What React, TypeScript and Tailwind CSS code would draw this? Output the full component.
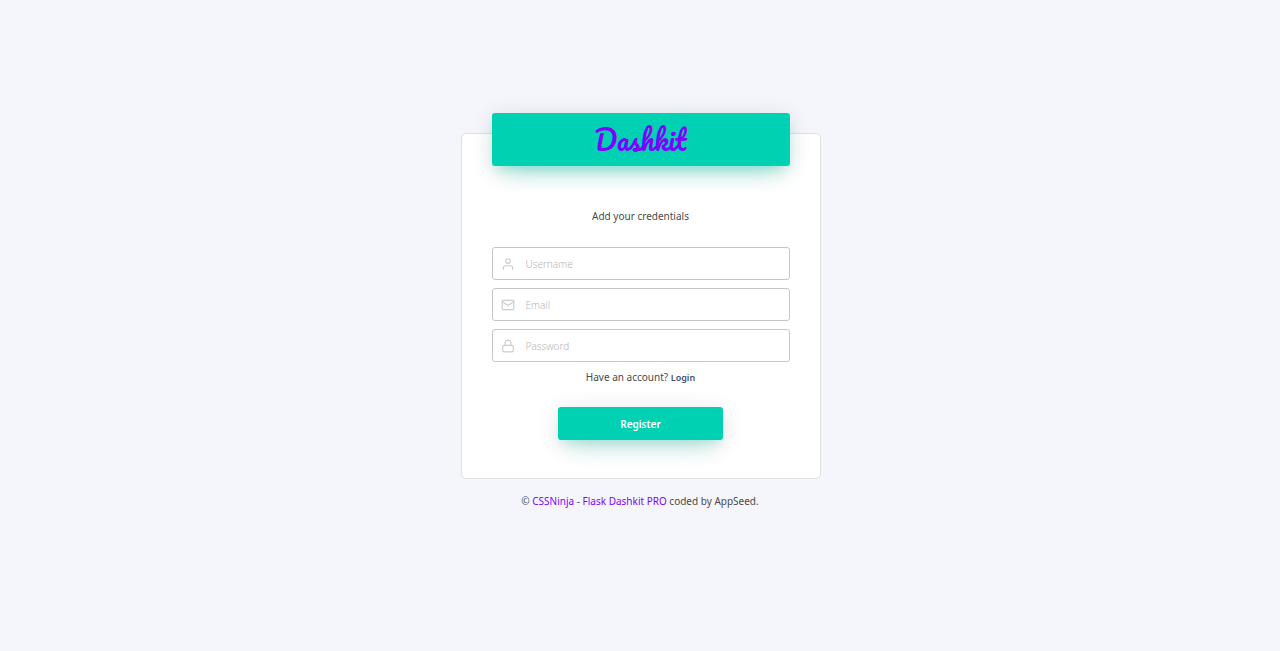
import type { ReactNode } from "react";

type FieldProps = {
  id: string;
  type: string;
  label: string;
  icon: ReactNode;
};

const raised =
  "bg-[#00d1b2] shadow-[0_14px_26px_-12px_rgba(0,209,178,0.42),0_4px_23px_0_rgba(0,0,0,0.12),0_8px_10px_-5px_rgba(0,209,178,0.2)]";

function Icon({ children }: { children: ReactNode }) {
  return (
    <svg
      className="size-3.5 shrink-0"
      viewBox="0 0 24 24"
      fill="none"
      stroke="currentColor"
      strokeWidth="2"
      strokeLinecap="round"
      strokeLinejoin="round"
      aria-hidden="true"
    >
      {children}
    </svg>
  );
}

function Field({ id, type, label, icon }: FieldProps) {
  return (
    <div className="flex h-[33px] items-center gap-[11px] rounded-[3px] border border-[#c6c6c6] bg-white pl-2 text-[#cccccc]">
      <label htmlFor={id} aria-label={label}>
        {icon}
      </label>
      <input
        id={id}
        name={id}
        type={type}
        placeholder={label}
        className="h-full min-w-0 flex-1 bg-transparent text-[10px] font-light text-[#4a4a4a] outline-none placeholder:text-[#b5b5b5]"
      />
    </div>
  );
}

export default function App() {
  return (
    <main className="flex min-h-screen flex-col items-center bg-[#f4f6fb] px-4 pt-[133px] pb-8 font-['Noto_Sans','Open_Sans',sans-serif] text-[10px] leading-4 text-[#4a4a4a]">
      <div className="ml-px w-full max-w-[360px] rounded-[5px] border border-[#e0e0e4] bg-white px-[30px] pb-[38px]">
        <h1
          className={`-mt-[21px] flex h-[53px] items-center justify-center rounded-[3px] font-['Pacifico','Lato',cursive] text-[27px] leading-none font-normal text-[#7f00ff] ${raised}`}
        >
          Dashkit
        </h1>
        <p className="mt-[42px] text-center">Add your credentials</p>
        <form className="mt-[23px]" onSubmit={(e) => e.preventDefault()}>
          <div className="flex flex-col gap-2">
            <Field
              id="username"
              type="text"
              label="Username"
              icon={
                <Icon>
                  <path d="M20 21v-2a4 4 0 0 0-4-4H8a4 4 0 0 0-4 4v2" />
                  <circle cx="12" cy="7" r="4" />
                </Icon>
              }
            />
            <Field
              id="email"
              type="email"
              label="Email"
              icon={
                <Icon>
                  <path d="M4 4h16c1.1 0 2 .9 2 2v12c0 1.1-.9 2-2 2H4c-1.1 0-2-.9-2-2V6c0-1.1.9-2 2-2z" />
                  <path d="m22 6-10 7L2 6" />
                </Icon>
              }
            />
            <Field
              id="password"
              type="password"
              label="Password"
              icon={
                <Icon>
                  <rect x="3" y="11" width="18" height="11" rx="2" />
                  <path d="M7 11V7a5 5 0 0 1 10 0v4" />
                </Icon>
              }
            />
          </div>
          <p className="mt-[7px] text-center">
            Have an account?{" "}
            <a href="#login" className="text-[9px] font-semibold text-[#475069]">
              Login
            </a>
          </p>
          <button
            type="submit"
            className={`mx-auto mt-[21px] block h-[33px] w-[165px] rounded-[3px] font-semibold text-white ${raised}`}
          >
            Register
          </button>
        </form>
      </div>
      <footer className="mt-3.5 text-center">
        ©{" "}
        <a href="#cssninja" className="text-[#7f00ff]">
          CSSNinja
        </a>{" "}
        -{" "}
        <a href="#dashkit" className="text-[#7f00ff]">
          Flask Dashkit PRO
        </a>{" "}
        coded by AppSeed.
      </footer>
    </main>
  );
}
